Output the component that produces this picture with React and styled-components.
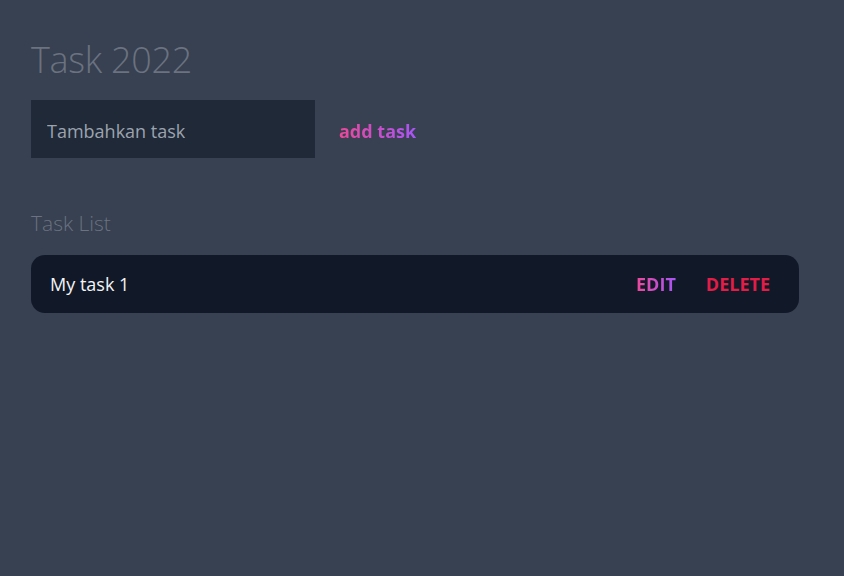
import React, { useState } from 'react';
import styled, { createGlobalStyle } from 'styled-components';

const GlobalStyle = createGlobalStyle`
  html, body {
    margin: 0;
    padding: 0;
    background: #374151;
    font-family: "Open Sans", "Noto Sans", sans-serif;
  }
`

const Page = styled.main`
  min-height: 576px;
  padding: 34px 0 0 31px;
  box-sizing: border-box;
`

const Container = styled.div`
  width: 768px;
  display: flex;
  flex-direction: column;
`

const Title = styled.h1`
  margin: 0;
  font-size: 36px;
  font-weight: 300;
  line-height: 52px;
  color: #6b7280;
  letter-spacing: -0.3px;
`

const Form = styled.form`
  display: flex;
  align-items: center;
  gap: 24px;
  margin-top: 14px;
`

const Input = styled.input`
  width: 284px;
  height: 58px;
  box-sizing: border-box;
  padding: 3px 16px 0;
  border: none;
  outline: none;
  background: #1f2937;
  color: #e5e7eb;
  font-family: inherit;
  font-size: 18px;

  &::placeholder {
    color: #9ca3af;
  }
`

const AddButton = styled.button`
  border: none;
  background: linear-gradient(90deg, #ec4899, #a855f7);
  -webkit-background-clip: text;
  background-clip: text;
  color: transparent;
  padding: 3px 0 0;
  font-family: inherit;
  font-size: 18px;
  font-weight: 700;
  cursor: pointer;
`

const SectionTitle = styled.h2`
  margin: 50px 0 0;
  font-size: 21px;
  font-weight: 300;
  line-height: 30px;
  color: #6b7280;
`

const List = styled.ul`
  list-style: none;
  margin: 17px 0 0;
  padding: 0;
  display: flex;
  flex-direction: column;
  gap: 12px;
`

const Item = styled.li`
  height: 58px;
  box-sizing: border-box;
  display: flex;
  align-items: center;
  padding: 0 29px 0 19px;
  background: #111827;
  border-radius: 14px;
`

const ItemText = styled.span`
  flex: 1;
  color: #f3f4f6;
  font-size: 18px;
`

const Actions = styled.div`
  display: flex;
  gap: 30px;
`

const ActionButton = styled.button`
  border: none;
  padding: 0;
  background: ${p => p.$danger ? 'none' : 'linear-gradient(90deg, #ec4899, #a855f7)'};
  -webkit-background-clip: text;
  background-clip: text;
  color: ${p => p.$danger ? '#e11d48' : 'transparent'};
  font-family: inherit;
  font-size: 18px;
  font-weight: 700;
  text-transform: uppercase;
  cursor: pointer;
`

export default function App() {
  const [tasks] = useState(['My task 1']);
  const [value, setValue] = useState('');

  return (
    <Page>
      <GlobalStyle />
      <Container>
        <Title>Task 2022</Title>
        <Form onSubmit={e => e.preventDefault()}>
          <Input
            placeholder="Tambahkan task"
            value={value}
            onChange={e => setValue(e.target.value)}
          />
          <AddButton type="submit">add task</AddButton>
        </Form>
        <SectionTitle>Task List</SectionTitle>
        <List>
          {tasks.map(t => (
            <Item key={t}>
              <ItemText>{t}</ItemText>
              <Actions>
                <ActionButton>edit</ActionButton>
                <ActionButton $danger>delete</ActionButton>
              </Actions>
            </Item>
          ))}
        </List>
      </Container>
    </Page>
  )
}
